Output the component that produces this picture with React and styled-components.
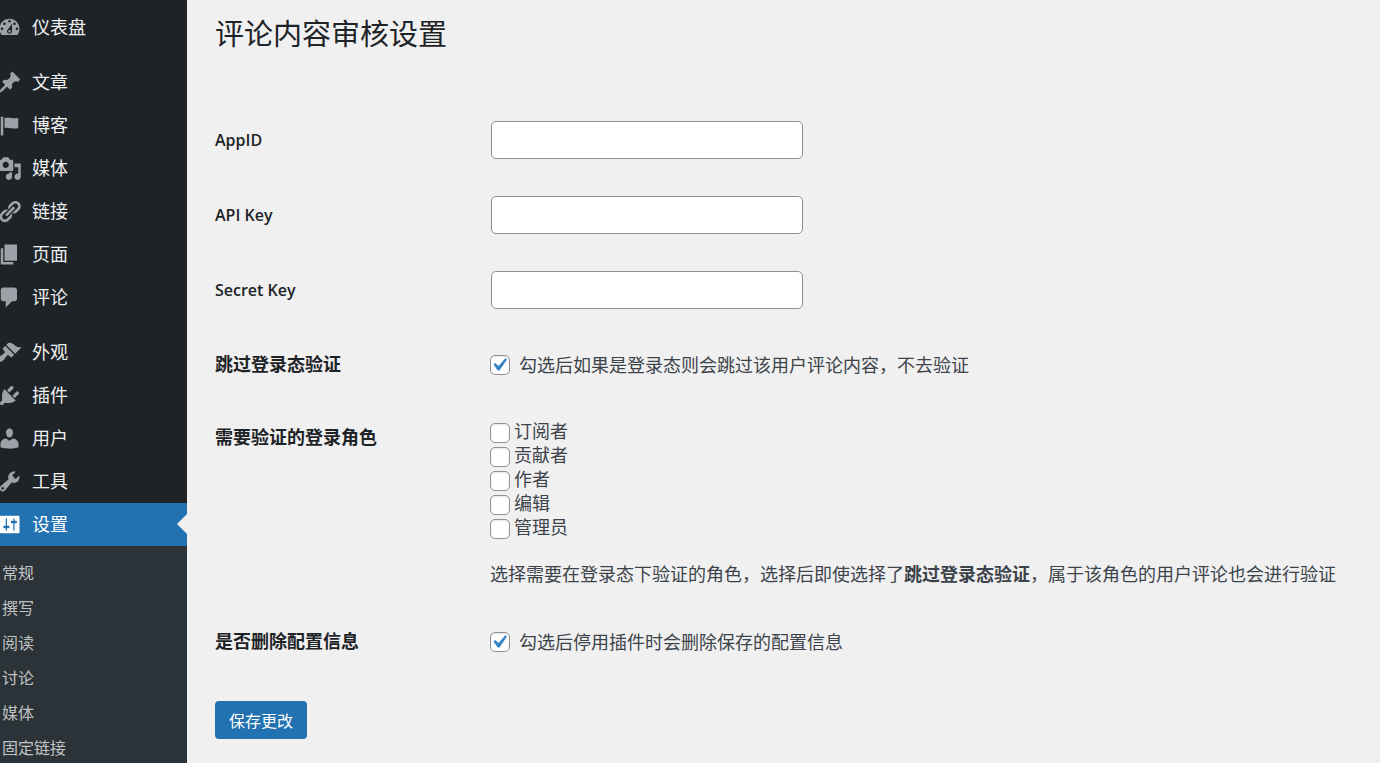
import React, { useState } from "react";
import styled, { createGlobalStyle } from "styled-components";

const GlobalStyle = createGlobalStyle`
  * {
    box-sizing: border-box;
  }

  body {
    margin: 0;
    background-color: #f0f0f0;
    color: #3c434a;
    font-family: "Open Sans", "Noto Sans CJK SC", sans-serif;
    font-size: 18px;
    line-height: 24px;
  }
`;

const Layout = styled.div`
  display: flex;
  min-height: 100vh;
`;

const Sidebar = styled.nav`
  flex: 0 0 187px;
  height: 100vh;
  padding-top: 6px;
  overflow: hidden;
  background-color: #1d2327;
`;

const MenuGroup = styled.ul`
  margin: 0 0 12px;
  padding: 0;
  list-style: none;
`;

const MenuLink = styled.a`
  position: relative;
  display: flex;
  align-items: center;
  gap: 10px;
  height: 43px;
  padding-bottom: 1px;
  color: ${(props) => (props.$active ? "#ffffff" : "#f0f0f1")};
  background-color: ${(props) => (props.$active ? "#2271b1" : "transparent")};
  text-decoration: none;
`;

const MenuIcon = styled.svg`
  width: 25px;
  height: 25px;
  margin-left: -3px;
  fill: ${(props) => (props.$active ? "#ffffff" : "#9ca2a7")};
`;

const MenuArrow = styled.span`
  position: absolute;
  right: 0;
  top: 11px;
  border: 10px solid transparent;
  border-left-width: 0;
  border-right-color: #f0f0f0;
`;

const Submenu = styled.ul`
  margin: 0;
  padding: 10px 0;
  list-style: none;
  background-color: #2c3338;
`;

const SubmenuLink = styled.a`
  display: block;
  padding-left: 2px;
  color: #c0c3c5;
  font-size: 16px;
  line-height: 35px;
  text-decoration: none;
`;

const Content = styled.main`
  flex: 1;
  min-width: 0;
  padding: 14px 28px 24px;
`;

const Title = styled.h1`
  margin: 0 0 48px;
  color: #1d2327;
  font-size: 29px;
  font-weight: 400;
  line-height: 40px;
`;

const Row = styled.div`
  display: grid;
  grid-template-columns: 275px 1fr;
  padding: ${(props) => (props.$text ? "19px 0 18px" : "25px 0 22px")};
`;

const RowLabel = styled.label`
  align-self: ${(props) => (props.$latin ? "center" : "start")};
  color: #1d2327;
  font-size: ${(props) => (props.$latin ? "16px" : "18px")};
  font-weight: ${(props) => (props.$latin ? 600 : 700)};
`;

const TextInput = styled.input`
  width: 312px;
  max-width: 100%;
  height: 38px;
  margin-left: 1px;
  padding: 0 10px;
  border: 1px solid #8c8f94;
  border-radius: 5px;
  background-color: #ffffff;
  font: inherit;
`;

const Checkbox = styled.input.attrs({ type: "checkbox" })`
  appearance: none;
  flex: 0 0 20px;
  height: 20px;
  margin: 0;
  border: 1px solid #8c8f94;
  border-radius: 5px;
  background: #ffffff center / 26px 26px no-repeat;
  box-shadow: inset 0 1px 2px rgba(0, 0, 0, 0.1);

  &:checked {
    background-image: url("data:image/svg+xml,%3Csvg xmlns='http://www.w3.org/2000/svg' viewBox='0 0 20 20'%3E%3Cpath d='M14.83 4.89l1.34.94-5.81 8.38H9.02L5.78 9.67l1.34-1.25 2.57 2.4z' fill='%233582c4'/%3E%3C/svg%3E");
    background-position: -5px -4px;
  }
`;

const CheckLabel = styled.label`
  display: flex;
  align-items: center;
  gap: 9px;
  line-height: 26px;
`;

const RoleLabel = styled.label`
  display: flex;
  align-items: flex-end;
  gap: 4px;
  height: 24px;
  line-height: 24px;
`;

const RoleGroup = styled.div`
  margin: -6px 0 -4px;
`;

const Description = styled.p`
  margin: 23px 0 0;
`;

const SaveButton = styled.button`
  height: 38px;
  margin-top: 24px;
  padding: 0 14px;
  border: 0;
  border-radius: 4px;
  background-color: #2271b1;
  color: #ffffff;
  font-family: inherit;
  font-size: 16px;
`;

const icons = {
  dashboard:
    "M3.76 16h12.48c1.1-1.37 1.76-3.11 1.76-5 0-4.42-3.58-8-8-8s-8 3.58-8 8c0 1.89.66 3.63 1.76 5zM10 4c.55 0 1 .45 1 1s-.45 1-1 1-1-.45-1-1 .45-1 1-1zM6 6c.55 0 1 .45 1 1s-.45 1-1 1-1-.45-1-1 .45-1 1-1zm8 0c.55 0 1 .45 1 1s-.45 1-1 1-1-.45-1-1 .45-1 1-1zm-5.37 5.55L12 7v6c0 1.1-.9 2-2 2s-2-.9-2-2c0-.57.24-1.08.63-1.45zM4 10c.55 0 1 .45 1 1s-.45 1-1 1-1-.45-1-1 .45-1 1-1zm12 0c.55 0 1 .45 1 1s-.45 1-1 1-1-.45-1-1 .45-1 1-1zm-5 3c0-.55-.45-1-1-1s-1 .45-1 1 .45 1 1 1 1-.45 1-1z",
  post: "M10.44 3.02l1.82-1.82 6.36 6.35-1.83 1.82c-1.05-.68-2.48-.57-3.41.36l-.75.75c-.92.93-1.04 2.35-.35 3.41l-1.83 1.82-2.41-2.41-2.8 2.79c-.42.42-3.38 2.71-3.8 2.29s1.86-3.39 2.28-3.81l2.79-2.79L4.1 9.36l1.83-1.82c1.05.69 2.48.57 3.4-.36l.75-.75c.93-.92 1.05-2.35.36-3.41z",
  flag: "M5 18V3H3v15h2zm1-6V4c3-1 7 1 11 0v8c-3 1.27-8-1-11 0z",
  media:
    "M13 11V4c0-.55-.45-1-1-1h-1.67L9 1H5L3.67 3H2c-.55 0-1 .45-1 1v7c0 .55.45 1 1 1h10c.55 0 1-.45 1-1zM7 4.5c1.38 0 2.5 1.12 2.5 2.5S8.38 9.5 7 9.5 4.5 8.38 4.5 7 5.62 4.5 7 4.5zM14 6h5v10.5c0 1.38-1.12 2.5-2.5 2.5S14 17.88 14 16.5s1.12-2.5 2.5-2.5c.17 0 .34.02.5.05V9h-3V6zm-4 8.05V13h2v3.5c0 1.38-1.12 2.5-2.5 2.5S7 17.88 7 16.5 8.12 14 9.5 14c.17 0 .34.02.5.05z",
  links:
    "M17.74 2.76c1.68 1.69 1.68 4.41 0 6.1l-1.53 1.52c-1.12 1.12-2.7 1.47-4.14 1.09l2.62-2.61.76-.77.76-.76c.84-.84.84-2.2 0-3.04-.84-.85-2.2-.85-3.04 0l-.77.76-3.38 3.38c-.37-1.44-.02-3.02 1.1-4.14l1.52-1.53c1.69-1.68 4.42-1.68 6.1 0zM8.59 13.43l5.34-5.34c.42-.42.42-1.1 0-1.52-.44-.43-1.13-.39-1.53 0l-5.33 5.34c-.42.42-.42 1.1 0 1.52.44.43 1.13.39 1.52 0zm-.76 2.29l4.14-4.15c.38 1.44.03 3.02-1.09 4.14l-1.52 1.53c-1.69 1.68-4.41 1.68-6.1 0-1.68-1.68-1.68-4.42 0-6.1l1.53-1.52c1.12-1.12 2.7-1.47 4.14-1.1l-4.14 4.15c-.85.84-.85 2.2 0 3.05.84.84 2.2.84 3.04 0z",
  page: "M6 15V2h10v13H6zm-1 1h8v2H3V5h2v11z",
  comments:
    "M5 2h9c1.1 0 2 .9 2 2v7c0 1.1-.9 2-2 2h-2l-5 5v-5H5c-1.1 0-2-.9-2-2V4c0-1.1.9-2 2-2z",
  appearance:
    "M14.48 11.06L7.41 3.99l1.5-1.5c.5-.56 2.3-.47 3.51.32 1.21.8 1.43 1.28 2.91 2.1 1.18.64 2.45 1.26 4.45.85zm-.71.71L6.7 4.7 4.93 6.47c-.39.39-.39 1.02 0 1.41l1.06 1.06c.39.39.39 1.03 0 1.42-.6.6-1.43 1.11-2.21 1.69-.35.26-.7.53-1.01.84C1.43 14.23.4 16.08 1.4 17.07c.99 1 2.84-.03 4.18-1.36.31-.31.58-.66.85-1.02.57-.78 1.08-1.61 1.69-2.21.39-.39 1.02-.39 1.41 0l1.06 1.06c.39.39 1.02.39 1.41 0z",
  plugins:
    "M13.11 4.36L9.87 7.6 8 5.73l3.24-3.24c.35-.34 1.05-.2 1.56.32.52.51.66 1.21.31 1.55zm-8 1.77l.91-1.12 9.01 9.01-1.19.84c-.71.71-2.63 1.16-3.82 1.16H6.14L4.9 17.26c-.59.59-1.54.59-2.12 0-.59-.58-.59-1.53 0-2.12l1.24-1.24v-3.88c0-1.13.4-3.19 1.09-3.89zm7.26 3.97l3.24-3.24c.34-.35 1.04-.21 1.55.31.52.51.66 1.21.31 1.55l-3.24 3.25z",
  users:
    "M10 9.25c-2.27 0-2.73-3.44-2.73-3.44C7 4.02 7.82 2 9.97 2c2.16 0 2.98 2.02 2.71 3.81 0 0-.41 3.44-2.68 3.44zm0 2.57L12.72 10c2.39 0 4.52 2.33 4.52 4.53v2.49s-3.65 1.13-7.24 1.13c-3.65 0-7.24-1.13-7.24-1.13v-2.49c0-2.25 1.94-4.48 4.47-4.48z",
  tools:
    "M16.68 9.77c-1.34 1.34-3.3 1.67-4.95.99l-5.41 6.52c-.99.99-2.59.99-3.58 0s-.99-2.59 0-3.57l6.52-5.42c-.68-1.65-.35-3.61.99-4.95 1.28-1.28 3.12-1.62 4.72-1.06l-2.89 2.89 2.82 2.82 2.86-2.87c.53 1.58.18 3.39-1.08 4.65zM3.81 16.21c.4.39 1.04.39 1.43 0 .4-.4.4-1.04 0-1.43-.39-.4-1.03-.4-1.43 0-.39.39-.39 1.03 0 1.43z",
  settings:
    "M18 16V4c0-.55-.45-1-1-1H3c-.55 0-1 .45-1 1v12c0 .55.45 1 1 1h14c.55 0 1-.45 1-1zM8 11h1c.55 0 1 .45 1 1s-.45 1-1 1H8v1.5c0 .28-.22.5-.5.5s-.5-.22-.5-.5V13H6c-.55 0-1-.45-1-1s.45-1 1-1h1V5.5c0-.28.22-.5.5-.5s.5.22.5.5V11zm5-2h-1c-.55 0-1-.45-1-1s.45-1 1-1h1V5.5c0-.28.22-.5.5-.5s.5.22.5.5V7h1c.55 0 1 .45 1 1s-.45 1-1 1h-1v5.5c0 .28-.22.5-.5.5s-.5-.22-.5-.5V9z",
};

const menu = [
  [{ icon: "dashboard", text: "仪表盘" }],
  [
    { icon: "post", text: "文章" },
    { icon: "flag", text: "博客" },
    { icon: "media", text: "媒体" },
    { icon: "links", text: "链接" },
    { icon: "page", text: "页面" },
    { icon: "comments", text: "评论" },
  ],
  [
    { icon: "appearance", text: "外观" },
    { icon: "plugins", text: "插件" },
    { icon: "users", text: "用户" },
    { icon: "tools", text: "工具" },
    {
      icon: "settings",
      text: "设置",
      active: true,
      children: ["常规", "撰写", "阅读", "讨论", "媒体", "固定链接"],
    },
  ],
];

const fields = [
  { id: "app-id", text: "AppID" },
  { id: "api-key", text: "API Key" },
  { id: "secret-key", text: "Secret Key" },
];

const roles = ["订阅者", "贡献者", "作者", "编辑", "管理员"];

function MenuItem({ item }) {
  return (
    <li>
      <MenuLink href="#" $active={item.active}>
        <MenuIcon viewBox="0 0 20 20" aria-hidden="true" $active={item.active}>
          <path d={icons[item.icon]} />
        </MenuIcon>
        {item.text}
        {item.active && <MenuArrow />}
      </MenuLink>
      {item.children && (
        <Submenu>
          {item.children.map((child) => (
            <li key={child}>
              <SubmenuLink href="#">{child}</SubmenuLink>
            </li>
          ))}
        </Submenu>
      )}
    </li>
  );
}

function SettingsForm() {
  const [values, setValues] = useState({});
  const [skip, setSkip] = useState(true);
  const [remove, setRemove] = useState(true);

  return (
    <form onSubmit={(e) => e.preventDefault()}>
      {fields.map((field) => (
        <Row key={field.id} $text>
          <RowLabel htmlFor={field.id} $latin>
            {field.text}
          </RowLabel>
          <TextInput
            id={field.id}
            type="text"
            value={values[field.id] || ""}
            onChange={(e) =>
              setValues({ ...values, [field.id]: e.target.value })
            }
          />
        </Row>
      ))}
      <Row>
        <RowLabel htmlFor="skip">跳过登录态验证</RowLabel>
        <CheckLabel>
          <Checkbox
            id="skip"
            checked={skip}
            onChange={(e) => setSkip(e.target.checked)}
          />
          勾选后如果是登录态则会跳过该用户评论内容，不去验证
        </CheckLabel>
      </Row>
      <Row>
        <RowLabel as="div" id="roles">
          需要验证的登录角色
        </RowLabel>
        <RoleGroup role="group" aria-labelledby="roles">
          {roles.map((role) => (
            <RoleLabel key={role}>
              <Checkbox />
              {role}
            </RoleLabel>
          ))}
          <Description>
            选择需要在登录态下验证的角色，选择后即使选择了
            <strong>跳过登录态验证</strong>
            ，属于该角色的用户评论也会进行验证
          </Description>
        </RoleGroup>
      </Row>
      <Row>
        <RowLabel htmlFor="remove">是否删除配置信息</RowLabel>
        <CheckLabel>
          <Checkbox
            id="remove"
            checked={remove}
            onChange={(e) => setRemove(e.target.checked)}
          />
          勾选后停用插件时会删除保存的配置信息
        </CheckLabel>
      </Row>
      <SaveButton type="submit">保存更改</SaveButton>
    </form>
  );
}

function App() {
  return (
    <Layout>
      <GlobalStyle />
      <Sidebar>
        {menu.map((group) => (
          <MenuGroup key={group[0].icon}>
            {group.map((item) => (
              <MenuItem key={item.icon} item={item} />
            ))}
          </MenuGroup>
        ))}
      </Sidebar>
      <Content>
        <Title>评论内容审核设置</Title>
        <SettingsForm />
      </Content>
    </Layout>
  );
}

export default App;
